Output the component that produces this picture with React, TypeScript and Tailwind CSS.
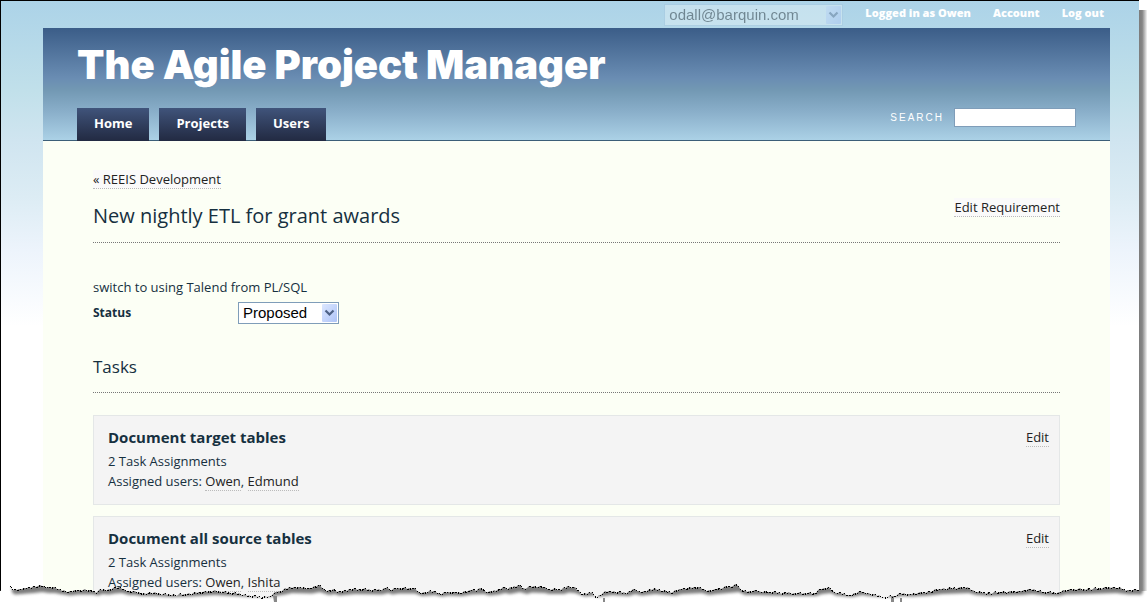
import type { ReactNode } from "react";

const tasks = [
  { title: "Document target tables", count: 2, users: ["Owen", "Edmund"] },
  { title: "Document all source tables", count: 2, users: ["Owen", "Ishita"] },
];

const tear: [number, number][] = [
  [10, 586], [13, 590], [20, 589], [25, 588], [32, 587], [40, 585], [47, 587], [53, 587], [58, 589], [65, 591],
  [68, 592], [77, 590], [90, 590], [97, 592], [100, 589], [107, 590], [113, 588], [120, 587], [127, 591], [133, 591],
  [140, 593], [153, 593], [170, 595], [187, 594], [203, 592], [213, 591], [233, 593], [253, 596], [267, 597], [277, 592],
  [283, 590], [290, 587], [310, 588], [318, 585], [327, 591], [333, 589], [337, 592], [353, 589], [380, 590], [387, 587],
  [390, 590], [397, 588], [413, 588], [420, 593], [433, 591], [440, 594], [447, 592], [460, 593], [470, 590], [482, 589],
  [488, 592], [497, 590], [503, 587], [508, 589], [518, 585], [525, 589], [530, 586], [543, 587], [547, 589], [562, 589],
  [567, 586], [573, 587], [583, 594], [592, 592], [595, 597], [603, 593], [610, 591], [627, 593], [633, 589], [640, 592],
  [653, 589], [673, 592], [680, 589], [700, 587], [707, 591], [715, 589], [737, 585], [743, 591], [757, 591], [767, 592],
  [790, 593], [814, 593], [820, 589], [829, 587], [834, 592], [850, 595], [860, 591], [867, 593], [884, 597], [894, 596],
  [900, 593], [910, 594], [927, 592], [940, 589], [967, 587], [974, 591], [987, 593], [1000, 592], [1020, 591], [1030, 589],
  [1044, 592], [1057, 593], [1064, 590], [1087, 589], [1114, 587], [1127, 590], [1137, 590], [1139, 591],
];

// Adds small teeth between the main points of the tear.
function jagged(points: [number, number][]): [number, number][] {
  const out: [number, number][] = [];
  for (let i = 0; i < points.length - 1; i++) {
    const [x0, y0] = points[i];
    const [x1, y1] = points[i + 1];
    for (let x = x0; x < x1; x += 2) {
      const t = (x - x0) / (x1 - x0);
      const tooth = x === x0 ? 0 : ((x * 7919) % 5) / 2 - 1;
      out.push([x, Math.round(y0 + (y1 - y0) * t + tooth)]);
    }
  }
  out.push(points[points.length - 1]);
  return out;
}

const edge = jagged(tear).map(([x, y]) => `${x},${y - 570}`).join(" ");
const shade = tear.map(([x, y]) => `${x + 2},${Math.min(y * 0.5 + 295.5 + 4, 597) - 570}`).join(" ");

function TornEdge() {
  return (
    <svg
      className="pointer-events-none absolute inset-x-0 bottom-0 h-8 w-full"
      viewBox="0 0 1147 32"
      preserveAspectRatio="none"
      aria-hidden="true"
    >
      <defs>
        <filter id="soft" x="-2%" y="-50%" width="104%" height="200%">
          <feGaussianBlur stdDeviation="1.4" />
        </filter>
        <clipPath id="below">
          <polygon points={`0,21 4,20 10,16 ${edge} 1147,21 1147,32 0,32`} />
        </clipPath>
      </defs>
      <g clipPath="url(#below)">
        <rect width="1147" height="32" fill="#fff" />
        <polygon points={`12,10 ${shade} 1143,22 1143,0 12,0`} fill="#7c7c7c" filter="url(#soft)" />
      </g>
      <rect x="0" y="21" width="10" height="11" fill="#fff" />
      <path d="M273 26h4v6h-3zM603 28h2v4h-2zM891 26h3v6h-3zM900 28h2v4h-2z" fill="#888" />
      <polyline
        points={edge}
        fill="none"
        stroke="#000"
        strokeWidth="1"
        strokeDasharray="1.5 1.5"
        shapeRendering="crispEdges"
        transform="translate(0.5 0.5)"
      />
    </svg>
  );
}

function TextLink({ children, lit = false }: { children: ReactNode; lit?: boolean }) {
  return (
    <a
      href="#"
      className={
        lit
          ? "inline-block border-b border-dotted border-[#bbb] bg-[#fafafa] leading-[18px] text-[#222]"
          : "inline-block border-b border-dotted border-[#bbb] leading-[18px] text-[#222]"
      }
    >
      {children}
    </a>
  );
}

function Arrow() {
  return (
    <svg className="pointer-events-none absolute top-0.5 right-0.5 h-[18px] w-[15px]" viewBox="0 0 15 18" aria-hidden="true">
      <defs>
        <linearGradient id="arrow" x1="0" y1="0" x2="1" y2="1">
          <stop offset="0" stopColor="#dce7ff" />
          <stop offset="1" stopColor="#aec4f7" />
        </linearGradient>
      </defs>
      <rect width="15" height="18" rx="1" fill="url(#arrow)" />
      <path d="M3.5 6.5 7.5 10.5 11.5 6.5" fill="none" stroke="#4d6185" strokeWidth="2.2" />
    </svg>
  );
}

export default function App() {
  return (
    <div className="relative h-screen overflow-hidden bg-white pr-2 font-['Open_Sans',sans-serif] text-[13px] leading-5 text-[#16303f]">
      <div
        className="absolute top-2.5 right-0 bottom-2 w-2 bg-[linear-gradient(to_right,#7c7c7c_0,#858585_40%,#c4c4c4_75%,#f4f4f4)]"
        aria-hidden="true"
      />
      <div className="relative min-h-full border-t border-l border-black bg-white bg-[linear-gradient(#acd3e8_0,#c1e0ea_90px,#d0e5f0_140px,#dcecf4_195px,#edf4fc_250px,#ffffff_325px)] pr-[29px] pl-[42px]">
        <div className="flex h-[27px] items-center justify-end pr-1.5 text-[11px] font-extrabold text-white">
          <div className="relative mr-[22px] opacity-40">
            <select
              disabled
              aria-label="User"
              className="block h-[22px] w-[179px] appearance-none border border-[#a4c4dc] bg-[#eaf6f8] pl-1 font-['Liberation_Sans',sans-serif] text-[15px] font-normal text-[#111] opacity-100"
            >
              <option>odall@barquin.com</option>
            </select>
            <Arrow />
          </div>
          <nav className="flex gap-[22px] pb-1">
            <a href="#">Logged in as Owen</a>
            <a href="#">Account</a>
            <a href="#">Log out</a>
          </nav>
        </div>

        <header className="border-b border-[#3c5f78] bg-[linear-gradient(#3b5d88_0,#6a8db3_45%,#7298b3_55%,#8aafca_75%,#abd1e6)] px-[34px]">
          <h1 className="h-20 pt-3 font-['Inter',sans-serif] text-[40px] leading-[50px] font-black whitespace-nowrap text-white">
            The Agile Project Manager
          </h1>
          <div className="flex items-start justify-between">
            <nav className="-mb-px flex gap-2.5 text-[13px] font-bold text-white">
              {["Home", "Projects", "Users"].map((item) => (
                <a key={item} href="#" className="h-[33px] bg-linear-to-b from-[#40547b] to-[#222a42] px-[17px] leading-[30px]">
                  {item}
                </a>
              ))}
            </nav>
            <div className="flex items-start gap-2.5">
              <label htmlFor="search" className="font-['Liberation_Sans',sans-serif] text-[10px] tracking-[2px] text-white">
                SEARCH
              </label>
              <input id="search" type="text" className="h-[19px] w-[122px] border border-[#7f9db9] bg-white px-1 text-xs text-black" />
            </div>
          </div>
        </header>

        <main className="min-h-screen bg-[#fcfff5] px-[50px] pt-[29px]">
          <div className="flex h-[19px]">
            <TextLink lit>« REEIS Development</TextLink>
          </div>
          <div className="flex h-[54px] items-start justify-between border-b border-dotted border-[#777]">
            <h2 className="pt-[13px] text-[20px] leading-7">New nightly ETL for grant awards</h2>
            <div className="pt-2">
              <TextLink lit>Edit Requirement</TextLink>
            </div>
          </div>

          <p className="mt-[34px]">switch to using Talend from PL/SQL</p>
          <div className="mt-[5px] flex">
            <label htmlFor="status" className="w-[145px] text-xs leading-[22px] font-bold">
              Status
            </label>
            <div className="relative">
              <select
                id="status"
                className="block h-[22px] w-[101px] appearance-none border border-[#7f9db9] bg-white pl-1 font-['Liberation_Sans',sans-serif] text-[15px] text-black"
              >
                <option>Proposed</option>
              </select>
              <Arrow />
            </div>
          </div>

          <h3 className="mt-[29px] h-10 border-b border-dotted border-[#777] text-[17px] leading-7">Tasks</h3>

          <ul className="mt-[22px] flex flex-col gap-[11px]">
            {tasks.map((task) => (
              <li key={task.title} className="flex h-[90px] items-start justify-between border border-[#e4e7e7] bg-[#f4f4f4] pt-2.5 pr-2.5 pl-3.5">
                <div>
                  <h4 className="text-[15px] leading-[22px] font-bold">{task.title}</h4>
                  <p className="pt-[3px]">{task.count} Task Assignments</p>
                  <p>
                    Assigned users: <TextLink>{task.users[0]}</TextLink>, <TextLink>{task.users[1]}</TextLink>
                  </p>
                </div>
                <div className="pt-px">
                  <TextLink>Edit</TextLink>
                </div>
              </li>
            ))}
          </ul>
        </main>
      </div>
      <TornEdge />
    </div>
  );
}
